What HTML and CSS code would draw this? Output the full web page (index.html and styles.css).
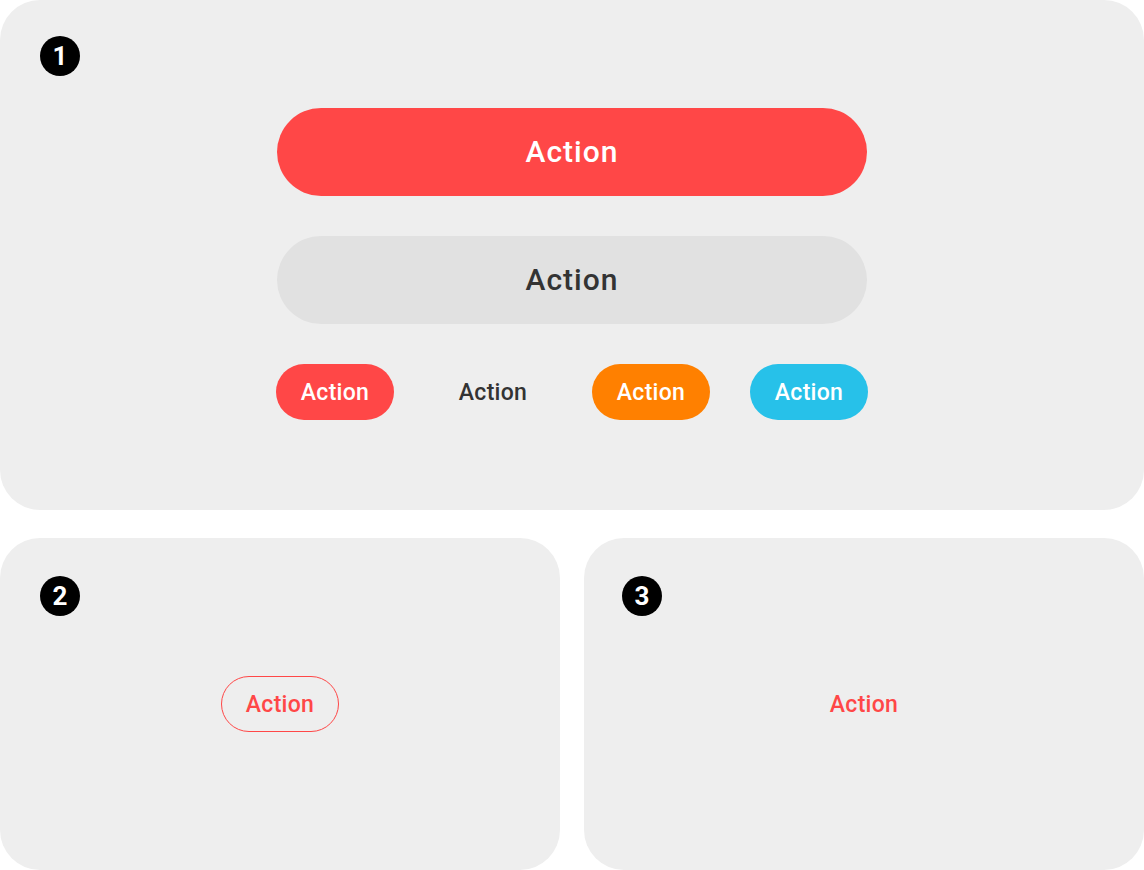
FILE: index.html
```html
<!DOCTYPE html>
<html>
<head>
<meta charset="utf-8">
<link rel="stylesheet" href="styles.css">
</head>
<body>
<div class="page">
  <section class="panel panel-top">
    <span class="badge">1</span>
    <button class="btn btn-large btn-red">Action</button>
    <button class="btn btn-large btn-gray">Action</button>
    <div class="row">
      <button class="btn btn-small btn-red">Action</button>
      <button class="btn btn-small btn-text">Action</button>
      <button class="btn btn-small btn-orange">Action</button>
      <button class="btn btn-small btn-blue">Action</button>
    </div>
  </section>
  <div class="bottom">
    <section class="panel panel-small">
      <span class="badge">2</span>
      <button class="btn btn-small btn-outline">Action</button>
    </section>
    <section class="panel panel-small panel-third">
      <span class="badge">3</span>
      <button class="btn btn-small btn-link">Action</button>
    </section>
  </div>
</div>
</body>
</html>
```

FILE: styles.css
```css
html, body {
  margin: 0;
  padding: 0;
  background: #ffffff;
}
body {
  font-family: Roboto, "Liberation Sans", Arial, sans-serif;
}
.page {
  width: 1144px;
  height: 870px;
  display: flex;
  flex-direction: column;
  gap: 28px;
}
.panel {
  position: relative;
  background: #eeeeee;
  border-radius: 40px;
  box-sizing: border-box;
}
.panel-top {
  height: 510px;
  padding-top: 108px;
  display: flex;
  flex-direction: column;
  align-items: center;
  gap: 40px;
}
.bottom {
  display: flex;
  gap: 24px;
  height: 332px;
}
.panel-small {
  flex: 1;
  display: flex;
  align-items: center;
  justify-content: center;
}
.badge {
  position: absolute;
  left: 40px;
  top: 36px;
  width: 40px;
  height: 40px;
  border-radius: 50%;
  background: #000000;
  color: #ffffff;
  font-weight: 700;
  font-size: 26px;
  line-height: 40px;
  text-align: center;
}
.panel-small .badge {
  top: 38px;
}
.panel-third .badge {
  left: 38px;
}
.btn {
  border: none;
  margin: 0;
  padding: 0;
  font-family: Roboto, "Liberation Sans", Arial, sans-serif;
  font-weight: 500;
  cursor: pointer;
  box-sizing: border-box;
}
.btn-large {
  width: 590px;
  height: 88px;
  border-radius: 44px;
  font-size: 30px;
  letter-spacing: 1px;
  padding-bottom: 2px;
}
.btn-small {
  width: 118px;
  height: 56px;
  border-radius: 28px;
  font-size: 23px;
  letter-spacing: 0.3px;
}
.row {
  display: flex;
  gap: 40px;
}
.btn-red {
  background: #ff4747;
  color: #ffffff;
}
.btn-gray {
  background: #e1e1e1;
  color: #333333;
}
.btn-text {
  background: transparent;
  color: #333333;
}
.btn-orange {
  background: #ff8000;
  color: #ffffff;
}
.btn-blue {
  background: #27c1e9;
  color: #ffffff;
}
.btn-outline {
  background: transparent;
  border: 1px solid #ff4747;
  color: #ff4747;
}
.btn-link {
  background: transparent;
  color: #ff4747;
}
```
